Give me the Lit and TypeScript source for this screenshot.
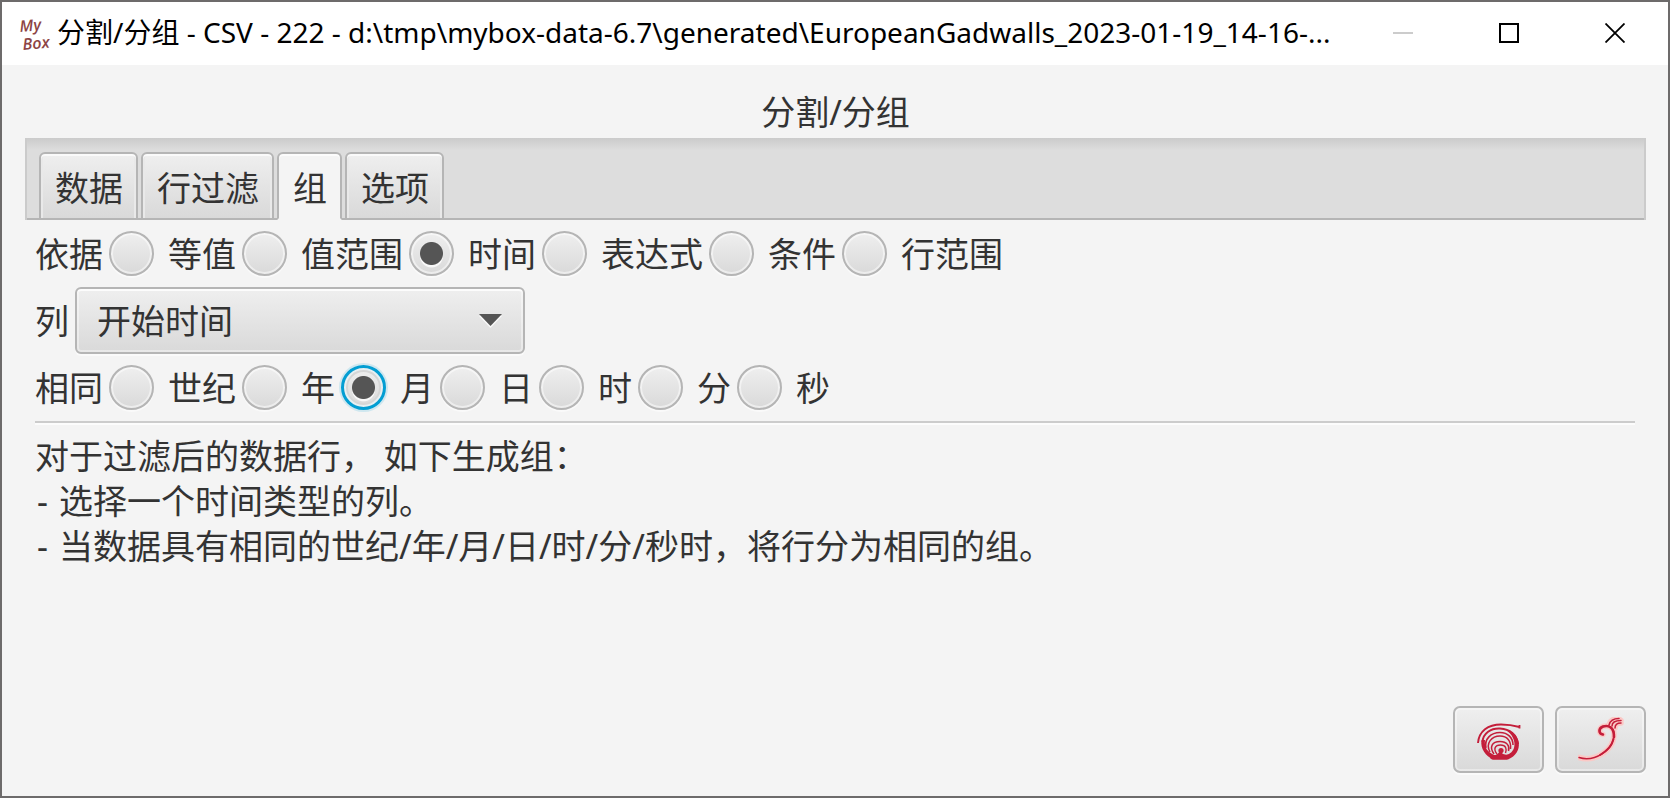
import { LitElement, html, svg, css } from "lit";
import { customElement, property, state } from "lit/decorators.js";

const spiralIcon = svg`
  <svg class="glyph" viewBox="0 -1 44 38" width="44" height="38" fill="none" stroke="#c41e3a" aria-hidden="true">
    <path d="M1 20C2 8 11 1.500 24 1.500C32 1.500 37 2.500 42.500 4" stroke-width="1.900"/>
    <path d="M42.500 2V5.500" stroke-width="1.800"/>
    <path d="M5.500 19C6 10 14 5 23 5.500C33 6 40 12 41 21" stroke-width="2"/>
    <path d="M4.500 17C3 26 9 33 16 36.500L31 36.500C39 33 42.500 27 41.800 20C41 13 35 8 29 7C35 11 39 18 37 25C35 30 32 31 29 32H17C11 29 7 25 8 17Z" fill="#c41e3a" stroke="none"/>
    <path d="M9 25C7 16 14 9.500 23 9.500C31 9.500 36 15 36 22" stroke-width="1.600"/>
    <path d="M13 29C8 20 15 13 23 13C30 13 34.500 18 33.500 26" stroke-width="1.500"/>
    <path d="M17 31C12 24 15 18.500 23 18.500C30 18.500 33 23 31.500 28" stroke-width="1.500"/>
    <path d="M20 31C16 26 18 22 23.500 22C29 22 30 26 28.500 30" stroke-width="1.400"/>
    <circle cx="24" cy="27.500" r="2.600" fill="#c41e3a" stroke="none"/>
    <path d="M13 35C17 32 20 33 23 28L26 31C29 32 31 32 33 33L30 36.500H15Z" fill="#c41e3a" stroke="none"/>
  </svg>`;

const plumePaths = svg`
  <path d="M1 40.500C16 45 36 34 36 17C36 10 30 8 25 9.500C21 11 20 17 25 17.500"/>
  <path d="M31 8C32 4 35 1.500 41 1.500M34 9C34 5 37 3.500 43 3.500M37 11C37 7 39 6 43 6"/>`;

const plumeIcon = svg`
  <svg class="glyph" viewBox="0 0 46 46" width="46" height="46" fill="none" stroke-linecap="round" aria-hidden="true">
    <g stroke="#fbc9c6" stroke-width="5.500">${plumePaths}</g>
    <g stroke="#c41e3a" stroke-width="1.500">${plumePaths}</g>
    <path d="M36 20C36 10 31 8 25 9.500C20 11.500 20.500 17 25 17.500" stroke="#c41e3a" stroke-width="2.600"/>
    <path d="M35.500 22C34 29 29 34 22 38" stroke="#c41e3a" stroke-width="2"/>
  </svg>`;

@customElement("radio-row")
export class RadioRow extends LitElement {
  @property() caption = "";
  @property() group = "";
  @property({ attribute: false }) options: string[] = [];
  @property() value = "";
  @property({ type: Boolean }) highlight = false;

  static styles = css`
    :host { display: block; }
    .row { display: flex; flex-wrap: wrap; align-items: center; gap: 6px; }
    .option { display: flex; align-items: center; gap: 14px; }
    .text { padding-top: 2px; line-height: 43px; }
    .radio {
      appearance: none; box-sizing: border-box; flex: none;
      width: 45px; height: 45px; margin: 0; outline: none;
      border: 2px solid #b5b5b5; border-radius: 50%;
      background: linear-gradient(#efefef, #d9d9d9);
      box-shadow: inset 0 0 0 2px rgba(255, 255, 255, 0.5), 0 2px 0 #fafafa;
    }
    .radio:checked {
      background:
        radial-gradient(circle at 50% 50%, #555 11px, transparent 12px),
        radial-gradient(circle at 50% 56%, #f8f8f8 11px, transparent 12px),
        linear-gradient(#efefef, #d9d9d9);
    }
    .highlight .radio:checked {
      border: 3px solid #039ed3;
      box-shadow: inset 0 0 0 2px #e6f0f3, inset 0 0 0 4px #d6d6d6, 0 0 0 2px #cfe7ef;
    }
  `;

  render() {
    return html`
      <div class="row ${this.highlight ? "highlight" : ""}" role="radiogroup" aria-labelledby="caption">
        <span class="text" id="caption">${this.caption}</span>
        ${this.options.map(
          (o) => html`
            <label class="option">
              <input class="radio" type="radio" name=${this.group} .value=${o} ?checked=${o === this.value}
                @change=${() => (this.value = o)} />
              <span class="text">${o}</span>
            </label>`
        )}
      </div>`;
  }
}

@customElement("app-root")
export class AppRoot extends LitElement {
  @state() private tab = "组";

  static styles = css`
    :host {
      display: block; color: #333;
      font-family: "Noto Sans", "Noto Sans CJK SC", sans-serif;
      font-size: 34px; line-height: 45px;
    }
    * { box-sizing: border-box; }
    button, select { font: inherit; color: inherit; margin: 0; }
    .window {
      display: flex; flex-direction: column; min-height: 100vh;
      border: 2px solid #6d6b6b; background: #f4f4f4;
    }
    .titlebar { display: flex; align-items: stretch; height: 63px; background: #fff; color: #000; }
    .brand { flex: none; align-self: center; margin: 0 1px 0 14px; }
    .brand text { font: italic 600 16px "Open Sans", sans-serif; fill: #8d4444; }
    .title {
      flex: 1; min-width: 0; align-self: center; overflow: hidden; white-space: nowrap;
      font-size: 28px; line-height: 40px; padding-bottom: 3px;
    }
    .control {
      flex: none; width: 106px; padding: 0 0 2px; border: 0; background: none;
      display: flex; align-items: center; justify-content: center;
    }
    .content { flex: 1; display: flex; flex-direction: column; padding: 23px 22px 23px 23px; }
    .heading { margin: 0 0 1px; font-size: 34px; line-height: 49px; font-weight: 400; text-align: center; }
    .tabs {
      display: flex; align-items: flex-end; gap: 3px; height: 82px; padding: 0 12px;
      border: 2px solid #cbcbcb; border-top: 0; border-bottom: 0;
      background: linear-gradient(#b5b5b5, #b5b5b5) bottom / 100% 2px no-repeat, linear-gradient(#cbcbcb, #ddd 12px);
    }
    .tab {
      height: 68px; padding: 4px 13px 0 14px; white-space: nowrap;
      border: 2px solid #b5b5b5; border-radius: 6px 6px 0 0;
      background: linear-gradient(#efefef, #d9d9d9);
      box-shadow: inset 0 2px 0 #fafafa, inset 2px 0 0 #e9e9e9, inset -2px 0 0 #e9e9e9;
    }
    .tab.selected { border-bottom-color: #f4f4f4; background: #f4f4f4; box-shadow: inset 0 2px 0 #fcfcfc; }
    .panel { display: flex; flex-direction: column; gap: 11px; padding: 11px 11px 11px 10px; }
    .field { display: flex; align-items: center; gap: 6px; }
    .field-label { padding-top: 2px; }
    .combo { display: grid; align-items: center; width: 450px; max-width: 100%; }
    .combo > * { grid-area: 1 / 1; }
    .select {
      appearance: none; width: 100%; height: 67px; padding: 2px 60px 0 20px; outline: none;
      border: 2px solid #b5b5b5; border-radius: 6px;
      background: linear-gradient(#efefef, #d9d9d9);
      box-shadow: inset 0 0 0 2px rgba(255, 255, 255, 0.4), inset 0 2px 0 #fafafa, 0 2px 0 #fafafa;
    }
    .arrow { justify-self: end; margin-right: 23px; pointer-events: none; }
    .rule { width: 100%; height: 4px; margin: 0; border: 0; border-top: 2px solid #ccc; background: #fcfcfc; }
    .notes { margin-top: -2px; }
    .line { margin: 0; }
    .points { margin: 0; padding: 0; list-style: none; }
    .point { display: flex; }
    .dash { flex: none; width: 24px; padding-left: 2px; }
    .actions { display: flex; justify-content: flex-end; gap: 11px; margin-top: auto; }
    .action {
      display: flex; align-items: center; justify-content: center;
      width: 91px; height: 67px; padding: 2px 0 0;
      border: 2px solid #b5b5b5; border-radius: 7px;
      background: linear-gradient(#efefef, #d9d9d9);
      box-shadow: inset 0 0 0 2px rgba(255, 255, 255, 0.4), 0 2px 0 #fafafa;
    }
    .action.cancel { padding: 0; }
  `;

  render() {
    return html`
      <div class="window">
        <header class="titlebar">
          <svg class="brand" viewBox="0 0 40 52" width="40" height="52" role="img" aria-label="MyBox">
            <text x="4" y="24" transform="rotate(-5 4 24)">My</text>
            <text x="7" y="42" transform="rotate(-5 7 42)">Box</text>
          </svg>
          <div class="title">分割/分组 - CSV - 222 - d:\\tmp\\mybox-data-6.7\\generated\\EuropeanGadwalls_2023-01-19_14-16-...</div>
          <button class="control" aria-label="最小化">
            <svg width="20" height="20"><path d="M0 10H20" stroke="#ccc" stroke-width="2"/></svg>
          </button>
          <button class="control" aria-label="最大化">
            <svg width="20" height="20"><path d="M1 1H19V19H1Z" fill="none" stroke="#000" stroke-width="2"/></svg>
          </button>
          <button class="control" aria-label="关闭">
            <svg width="20" height="20"><path d="M0.500 0.500L19.500 19.500M19.500 0.500L0.500 19.500" stroke="#000" stroke-width="1.800"/></svg>
          </button>
        </header>
        <main class="content">
          <h1 class="heading">分割/分组</h1>
          <div class="tabs" role="tablist">
            ${["数据", "行过滤", "组", "选项"].map(
              (t) => html`<button class="tab ${t === this.tab ? "selected" : ""}" role="tab"
                aria-selected=${t === this.tab} @click=${() => (this.tab = t)}>${t}</button>`
            )}
          </div>
          <section class="panel" role="tabpanel">
            <radio-row caption="依据" group="by" value="时间"
              .options=${["等值", "值范围", "时间", "表达式", "条件", "行范围"]}></radio-row>
            <div class="field">
              <label class="field-label" for="column">列</label>
              <div class="combo">
                <select class="select" id="column"><option>开始时间</option></select>
                <svg class="arrow" width="23" height="14" aria-hidden="true">
                  <path d="M0 2H23L11.500 14Z" fill="#fafafa"/><path d="M0 0H23L11.500 12Z" fill="#555"/>
                </svg>
              </div>
            </div>
            <radio-row caption="相同" group="same" value="月" highlight
              .options=${["世纪", "年", "月", "日", "时", "分", "秒"]}></radio-row>
            <hr class="rule" />
            <div class="notes">
              <p class="line">对于过滤后的数据行， 如下生成组：</p>
              <ul class="points">
                <li class="point"><span class="dash">-</span><span>选择一个时间类型的列。</span></li>
                <li class="point"><span class="dash">-</span><span>当数据具有相同的世纪/年/月/日/时/分/秒时，将行分为相同的组。</span></li>
              </ul>
            </div>
          </section>
          <div class="actions">
            <button class="action" aria-label="确定">${spiralIcon}</button>
            <button class="action cancel" aria-label="取消">${plumeIcon}</button>
          </div>
        </main>
      </div>`;
  }
}
